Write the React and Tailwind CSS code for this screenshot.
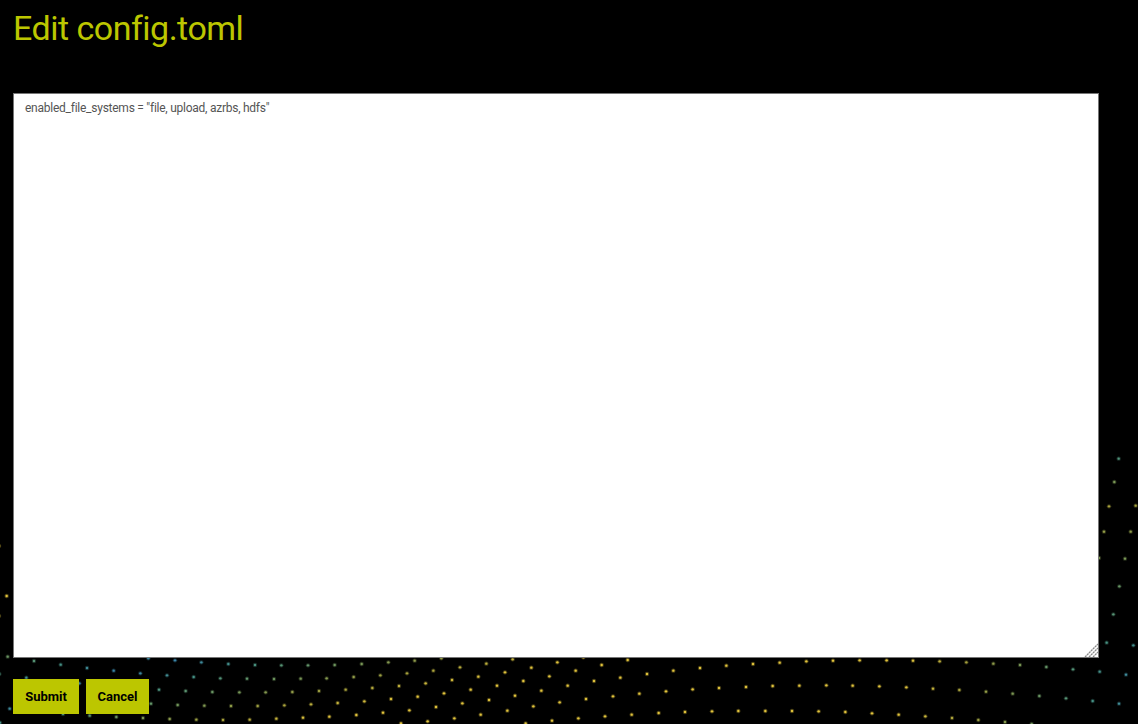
import React from 'react';

// dot field, read off the picture: [originX, originY, [x, y, ...] at 3x]
const dotGroups = [
  [0, 520, [-3, 78, 20, 228, -3, 288]],
  [0, 655, [23, 5, 102, 18, 182, 29, 261, 39, 341, 47, 421, 55, 445, 10, -2, 57, 79, 68, 238, 85, 29, 161, 189, 177, 269, 182, 349, 186, 429, 189, 0, 203]],
  [150, 655, [
    75, 16, 154, 22, 235, 27, 315, 30, 394, 31, 474, 31,
    51, 61, 131, 66, 211, 70, 291, 71, 372, 72, 452, 71,
    27, 104, 107, 108, 187, 111, 268, 112, 347, 112, 427, 111, 507, 108,
    3, 146, 83, 150, 163, 152, 243, 153, 323, 153, 403, 151, 483, 148,
    59, 192, 139, 194, 219, 195, 299, 194, 379, 191, 459, 188,
  ]],
  [320, 650, [
    44, 45, 125, 42, 205, 37, 284, 32, 364, 25,
    20, 85, 101, 81, 181, 76, 261, 70, 340, 62, 420, 52, 499, 41, 578, 28,
    77, 119, 157, 114, 237, 108, 317, 100, 396, 90, 475, 80, 555, 67, 634, 53, 712, 37, 790, 22,
    53, 159, 133, 154, 213, 147, 293, 140, 372, 130, 452, 119, 531, 107, 610, 93, 688, 79, 767, 62, 845, 45, 923, 30,
    28, 200, 109, 195, 189, 188, 268, 181, 348, 171, 427, 160, 507, 150, 585, 137, 664, 122, 743, 107, 822, 93, 901, 83, 981, 72, 1060, 62, 1140, 54,
    243, 220, 323, 214, 403, 205, 482, 194, 562, 182, 640, 169, 719, 157, 798, 147, 879, 139, 958, 131, 1038, 124, 1118, 118, 1197, 114,
    617, 220, 696, 212, 775, 205, 855, 199, 935, 194, 1016, 189, 1095, 186, 1176, 184,
  ]],
  [720, 650, [
    19, 47, 99, 42, 179, 38, 259, 34, 339, 32, 419, 31, 500, 31, 579, 32, 659, 34, 739, 37, 820, 41, 900, 45, 979, 51, 1059, 58, 1139, 65, 1218, 74,
    78, 111, 158, 108, 238, 107, 319, 106, 398, 107, 478, 109, 559, 112, 639, 116, 718, 120, 798, 125, 878, 131, 958, 138, 1038, 145, 1118, 153, 1197, 161,
    55, 183, 136, 183, 216, 183, 296, 184, 376, 186, 456, 190, 536, 194, 616, 199, 696, 204, 775, 210, 855, 216, 935, 222,
  ]],
  [1000, 440, [356, 56, 343, 126, 327, 199, 407, 197, 312, 275, 392, 275, 297, 354, 375, 356, 358, 439, 340, 523, 320, 608, 400, 616]],
];

const stops = [
  [56, 130, 170],
  [70, 145, 130],
  [115, 150, 90],
  [165, 160, 60],
  [225, 195, 60],
];

// blue on both flanks, yellow in the middle of the wave
function dotColor(x, y) {
  const left = Math.abs(y - (695 - (x - 26) * 0.243)) / 95;
  const right = Math.hypot(x - 1150, y - 690) / 250;
  const t = Math.min(1, left, right) * (stops.length - 1);
  const i = Math.min(Math.floor(t), stops.length - 2);
  const f = t - i;
  const c = stops[i].map((v, n) => Math.round(v + (stops[i + 1][n] - v) * f));
  return `rgb(${c[0]},${c[1]},${c[2]})`;
}

const dots = dotGroups.flatMap(([ox, oy, pts]) => {
  const out = [];
  for (let i = 0; i < pts.length; i += 2) {
    out.push({ x: ox + pts[i] / 3, y: oy + pts[i + 1] / 3 });
  }
  return out;
});

const DotField = () => (
  <svg className="absolute inset-0" width="1138" height="724" viewBox="0 0 1138 724">
    {dots.map((d, i) => (
      <g key={i} fill={dotColor(d.x, d.y)}>
        <circle cx={d.x} cy={d.y} r="2.2" opacity="0.3" />
        <circle cx={d.x} cy={d.y} r="1.2" />
      </g>
    ))}
  </svg>
);

const ResizeGrip = () => (
  <svg className="absolute bottom-[1px] right-[1px] pointer-events-none" width="14" height="14" viewBox="0 0 14 14" stroke="#8a8a8a" strokeWidth="1.3" strokeDasharray="2.2 0.6">
    <path d="M1 14 14 1" />
    <path d="M5 14 14 5" />
    <path d="M9 14 14 9" />
  </svg>
);

const Button = ({ children, className }) => (
  <button className={`h-[35px] bg-[#bcc600] text-black text-[13px] font-bold font-['Roboto',sans-serif] ${className}`}>
    {children}
  </button>
);

const App = () => {
  return (
    <div className="relative h-screen overflow-hidden bg-black">
      <DotField />
      <div className="relative flex flex-col px-[13px] pt-[9px] font-['Roboto',sans-serif]">
        <h1 className="text-[34px] leading-[38px] font-normal tracking-[-0.5px] text-[#bcc600]">Edit config.toml</h1>
        <div className="relative mt-[46px] w-[1086px]">
          <textarea
            className="block h-[565px] w-full resize-none border border-[#767676] bg-white px-[11px] py-[7px] text-[12px] leading-[15px] tracking-[-0.25px] text-[#555555] font-['Roboto',sans-serif]"
            defaultValue={'enabled_file_systems = "file, upload, azrbs, hdfs"'}
          />
          <ResizeGrip />
        </div>
        <div className="mt-[21px] flex gap-[7px]">
          <Button className="w-[66px]">Submit</Button>
          <Button className="w-[63px]">Cancel</Button>
        </div>
      </div>
    </div>
  );
};

export default App;
